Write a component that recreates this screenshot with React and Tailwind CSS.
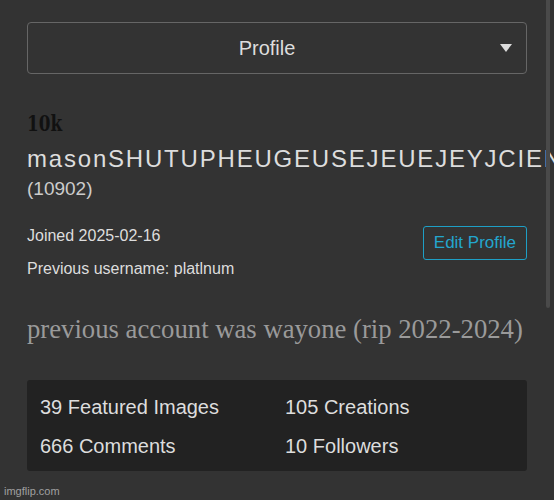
export default function App() {
  return (
    <div className="relative w-[554px] h-[500px] overflow-hidden bg-[#333333] font-['Liberation_Sans',Arial,sans-serif]">
      <div className="pl-[27px] pt-[22px] w-[554px]">
        <div className="w-[500px] h-[52px] border border-[#666666] rounded-[4px] flex items-center pl-[12px] pr-[14px]">
          <div className="flex-1 text-center text-[20px] text-[#dddddd] pr-[6px]">Profile</div>
          <svg width="12" height="9" viewBox="0 0 12 9" className="shrink-0">
            <path d="M0 0 L12 0 L6 8 Z" fill="#dddddd" />
          </svg>
        </div>

        <div className="mt-[37px] h-[24px] leading-[24px]">
          <span className="inline-block origin-left scale-x-[0.85] text-[22px] font-bold text-[#111111] font-['DejaVu_Serif_Condensed',serif]">10k</span>
        </div>

        <div className="whitespace-nowrap text-[24px] leading-[28px] tracking-[1.8px] text-[#dddddd] mt-[10px]">masonSHUTUPHEUGEUSEJEUEJEYJCIENWJSJSJ</div>
        <div className="text-[19px] leading-[22px] text-[#cccccc] mt-[5px]">(10902)</div>

        <div className="flex w-[500px] mt-[26px]">
          <div className="flex-1 text-[16px] text-[#dddddd]">
            <div className="leading-[20px]">Joined 2025-02-16</div>
            <div className="leading-[20px] mt-[13px]">Previous username: platlnum</div>
          </div>
          <div className="h-[34px] px-[10px] border border-[#1e9fc6] rounded-[3px] text-[17px] text-[#23a6ce] flex items-center">Edit Profile</div>
        </div>

        <div className="mt-[34px] text-[26.7px] leading-[32px] text-[#9a9a9a] font-['Liberation_Serif','Times_New_Roman',serif] whitespace-nowrap">previous account was wayone (rip 2022-2024)</div>

        <div className="mt-[35px] w-[500px] h-[91px] bg-[#222222] rounded-[3px] pl-[13px] pt-[15px] text-[20px] text-[#dddddd]">
          <div className="flex leading-[24px]">
            <div className="w-[245px]">39 Featured Images</div>
            <div>105 Creations</div>
          </div>
          <div className="flex leading-[24px] mt-[15px]">
            <div className="w-[245px]">666 Comments</div>
            <div>10 Followers</div>
          </div>
        </div>
      </div>

      <div className="absolute left-[4px] top-[484px] text-[11px] leading-[14px] text-[#a0a0a0]">imgflip.com</div>
      <div className="absolute left-[546px] top-0 w-[4px] h-[308px] rounded-b-full bg-[#4a4a4a]"></div>
    </div>
  );
}
